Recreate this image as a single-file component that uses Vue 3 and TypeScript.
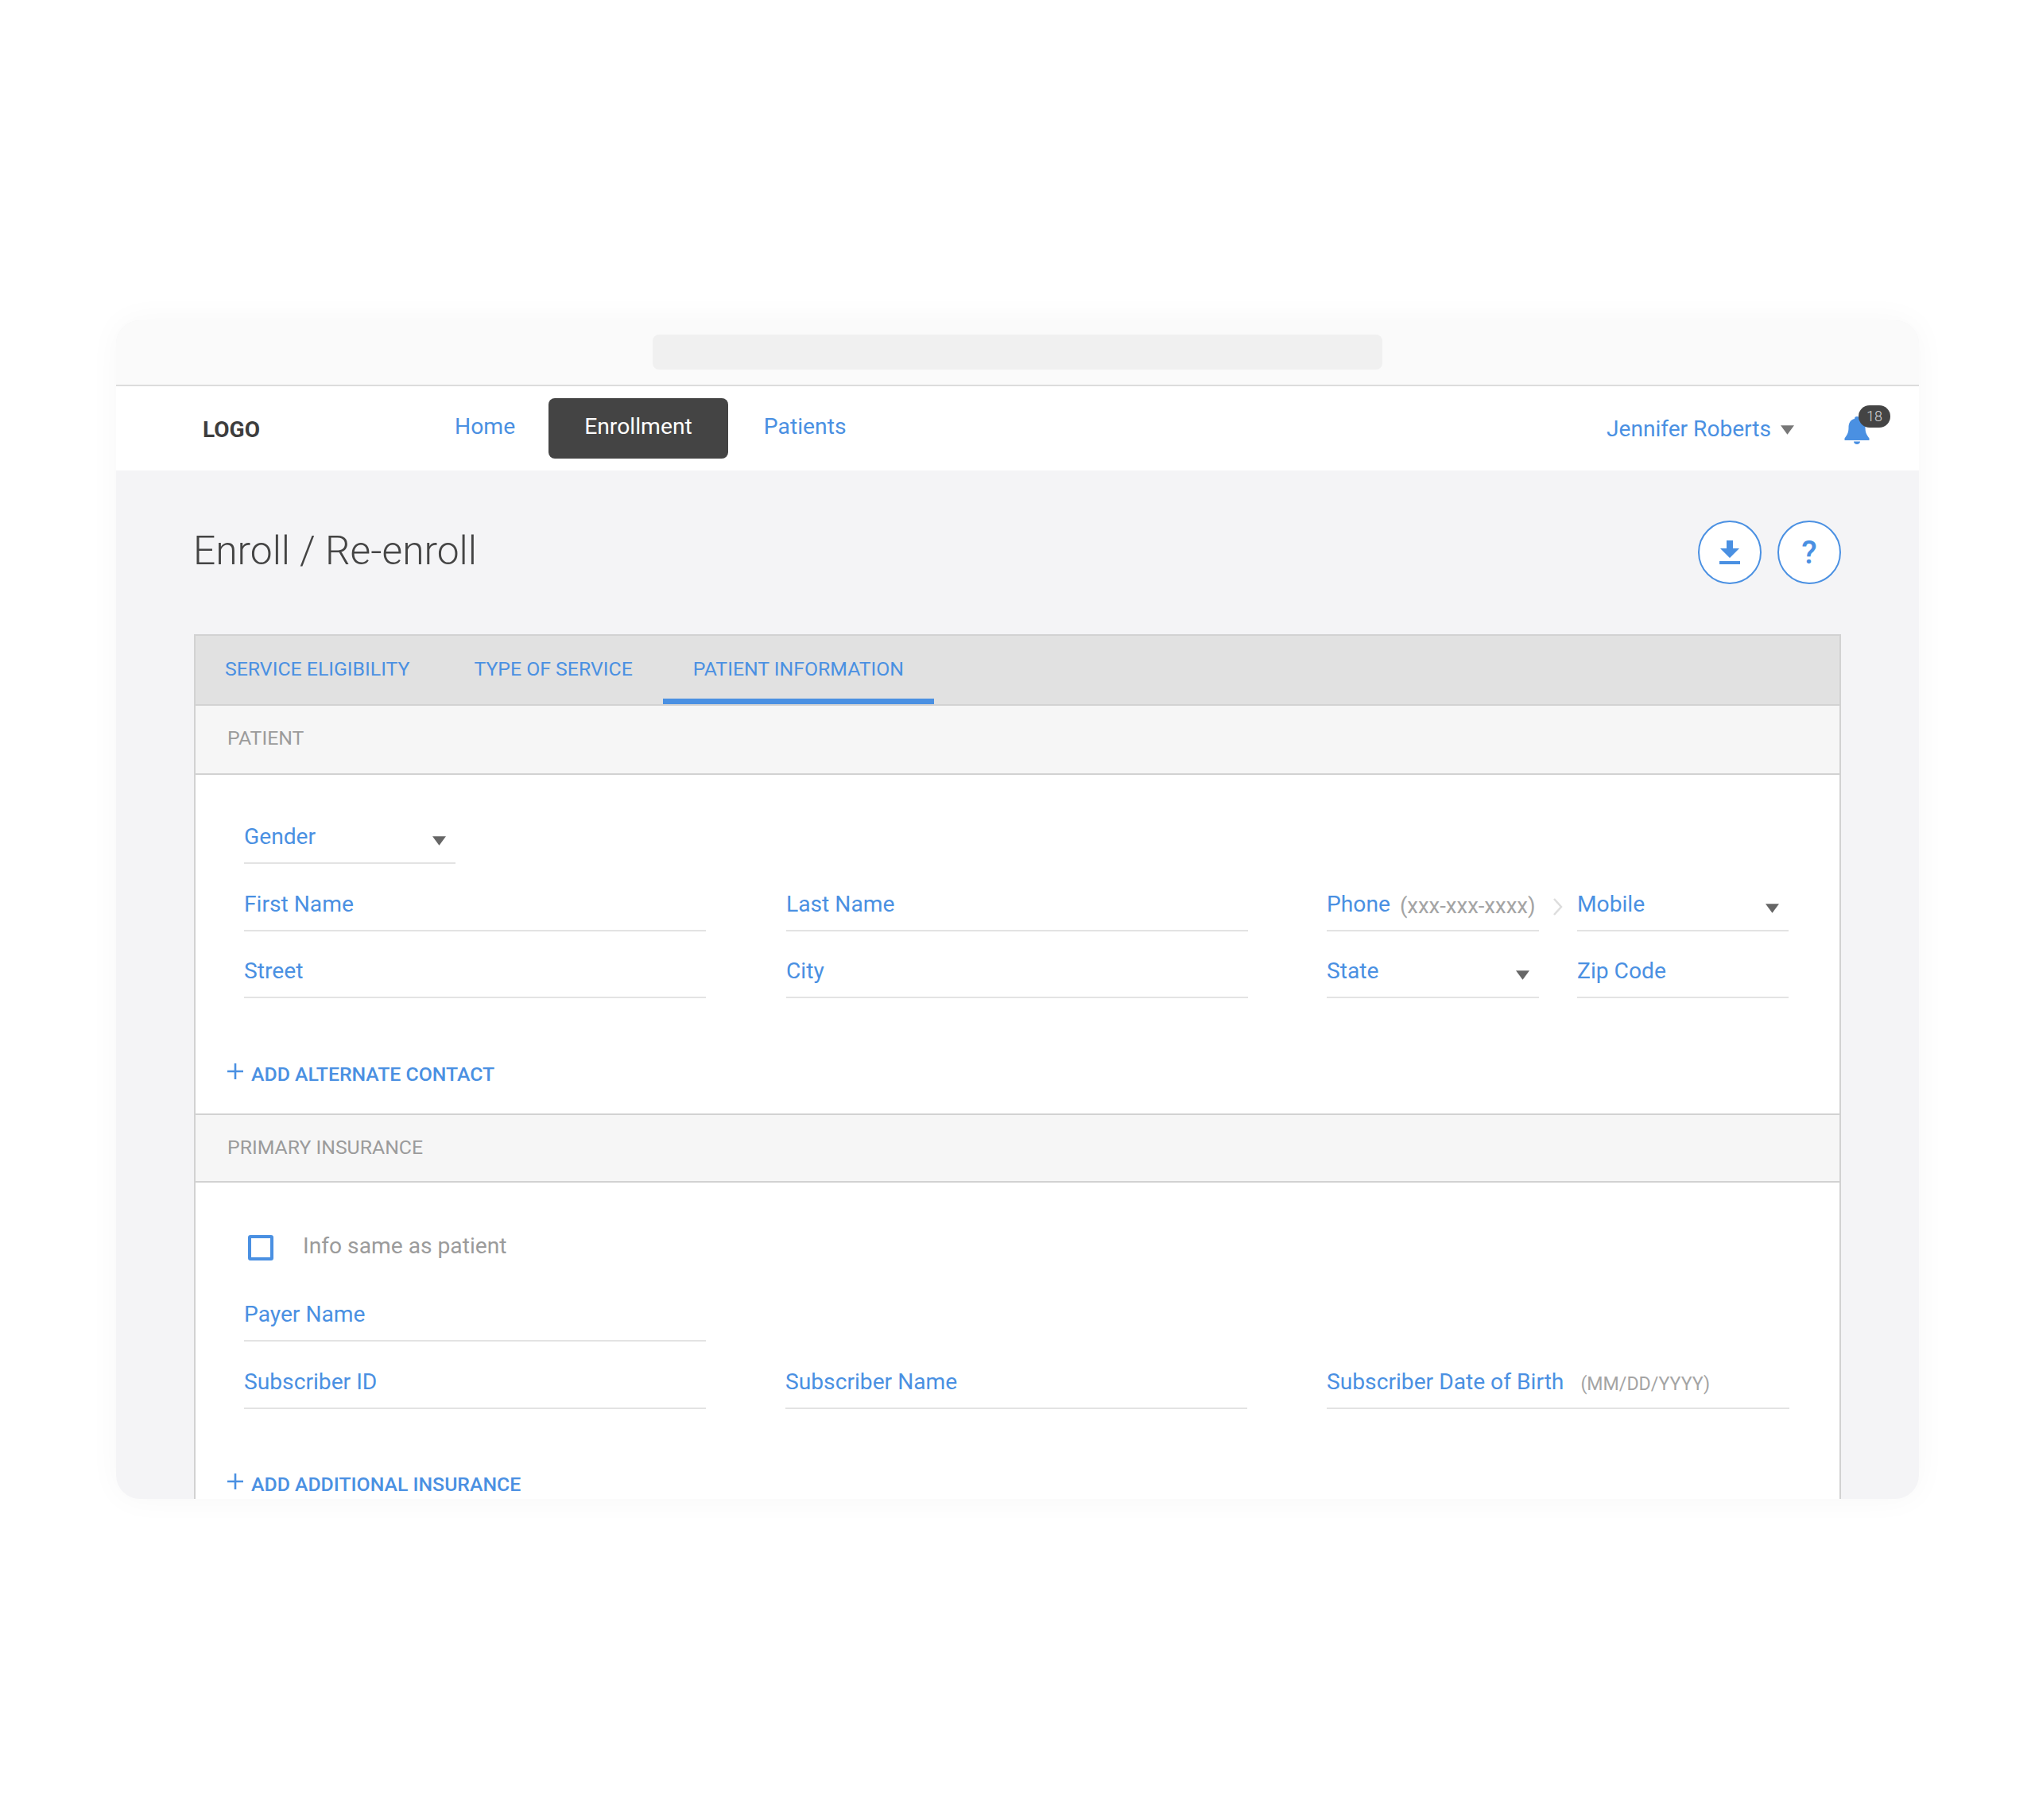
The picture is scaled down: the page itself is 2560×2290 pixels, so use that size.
<script setup lang="ts">
type Field = {
  label: string
}

const subscriberRow: Field[] = [{ label: 'Subscriber ID' }, { label: 'Subscriber Name' }]
const tabs: string[] = ['SERVICE ELIGIBILITY', 'TYPE OF SERVICE', 'PATIENT INFORMATION']
</script>

<template>
  <div class="page">
    <div class="window">
      <div class="chrome">
        <div class="address"></div>
      </div>

      <header class="nav">
        <div class="logo">LOGO</div>
        <a class="nav-link home">Home</a>
        <a class="nav-link active">Enrollment</a>
        <a class="nav-link">Patients</a>
        <div class="user">
          <span class="user-name">Jennifer Roberts</span>
          <svg class="user-caret" viewBox="0 0 18 12"><path d="M0 0H18L9 12Z" /></svg>
        </div>
        <div class="bell">
          <svg viewBox="0 0 32 36" width="32" height="36">
            <path d="M16 1c2 0 3 1.300 3 3 5.500 1.300 7.500 5.500 7.500 11 0 6 1.500 9 5 13.500V31H.5v-2.500C4 24 5.500 21 5.500 15c0-5.500 2-9.700 7.500-11 0-1.700 1-3 3-3Z" />
            <path d="M12 32.500h8c0 2-1.800 3.500-4 3.500s-4-1.500-4-3.500Z" />
          </svg>
          <span class="badge">18</span>
        </div>
      </header>

      <main class="content">
        <div class="title-row">
          <h1>Enroll / Re-enroll</h1>
          <div class="round-buttons">
            <button class="round">
              <svg viewBox="0 0 26 30" width="26" height="30">
                <path d="M9 0h8v10h8L13 22 1 10h8Z" />
                <rect x="0" y="26" width="26" height="4" />
              </svg>
            </button>
            <button class="round question">?</button>
          </div>
        </div>

        <section class="panel">
          <div class="tabs">
            <div v-for="(tab, i) in tabs" :key="tab" class="tab" :class="{ current: i === 2 }">{{ tab }}</div>
          </div>

          <div class="section-head first">PATIENT</div>
          <div class="section-body patient">
            <div class="field gender">
              <span class="label">Gender</span>
              <svg class="caret" viewBox="0 0 18 12"><path d="M0 0H18L9 12Z" /></svg>
            </div>
            <div class="row">
              <div class="field"><span class="label">First Name</span></div>
              <div class="field mid"><span class="label">Last Name</span></div>
              <div class="split">
                <div class="field">
                  <span class="label">Phone</span>
                  <span class="hint phone-hint">(xxx-xxx-xxxx)</span>
                </div>
                <svg class="chevron" viewBox="0 0 14 22"><path d="M2 1l9 10-9 10" /></svg>
                <div class="field">
                  <span class="label">Mobile</span>
                  <svg class="caret" viewBox="0 0 18 12"><path d="M0 0H18L9 12Z" /></svg>
                </div>
              </div>
            </div>
            <div class="row address-row">
              <div class="field"><span class="label">Street</span></div>
              <div class="field mid"><span class="label">City</span></div>
              <div class="split">
                <div class="field">
                  <span class="label">State</span>
                  <svg class="caret" viewBox="0 0 18 12"><path d="M0 0H18L9 12Z" /></svg>
                </div>
                <div class="field"><span class="label">Zip Code</span></div>
              </div>
            </div>
            <a class="add-link contact">
              <svg viewBox="0 0 20 20" width="20" height="20"><path d="M10 0v20M0 10h20" /></svg>
              <span>ADD ALTERNATE CONTACT</span>
            </a>
          </div>

          <div class="section-head">PRIMARY INSURANCE</div>
          <div class="section-body">
            <label class="same">
              <span class="checkbox"></span>
              <span class="same-text">Info same as patient</span>
            </label>
            <div class="row payer">
              <div class="field"><span class="label">Payer Name</span></div>
            </div>
            <div class="row">
              <div v-for="f in subscriberRow" :key="f.label" class="field">
                <span class="label">{{ f.label }}</span>
              </div>
              <div class="field">
                <span class="label">Subscriber Date of Birth</span>
                <span class="hint dob-hint">(MM/DD/YYYY)</span>
              </div>
            </div>
            <a class="add-link insurance">
              <svg viewBox="0 0 20 20" width="20" height="20"><path d="M10 0v20M0 10h20" /></svg>
              <span>ADD ADDITIONAL INSURANCE</span>
            </a>
          </div>
        </section>
      </main>
    </div>
  </div>
</template>

<style>
html,
body {
  margin: 0;
  background: #ffffff;
}
</style>

<style scoped>
.page {
  height: 2290px;
  box-sizing: border-box;
  padding: 403px 146px 0;
  font-family: Roboto, "Liberation Sans", sans-serif;
  color: #4a90e2;
}

.window {
  height: 1483px;
  border-radius: 30px;
  overflow: hidden;
  background: #f4f4f6;
  box-shadow: 0 0 40px rgba(0, 0, 0, 0.035);
}

.chrome {
  height: 83px;
  box-sizing: border-box;
  padding-top: 18px;
  background: #fafafa;
  border-bottom: 2px solid #dcdcdc;
  display: flex;
  justify-content: center;
}

.address {
  width: 918px;
  height: 44px;
  border-radius: 8px;
  background: #f0f0f0;
}

.nav {
  height: 106px;
  background: #ffffff;
  display: flex;
  align-items: center;
}

.logo {
  width: 318px;
  margin-left: 109px;
  font-size: 28px;
  font-weight: 700;
  color: #3d3d3d;
  padding-top: 2px;
  box-sizing: border-box;
}

.nav-link {
  font-size: 28.3px;
  height: 76px;
  padding: 0 45px;
  box-sizing: border-box;
  line-height: 72px;
}

.nav-link.home {
  padding: 0 42px 0 0;
  margin-left: -1px;
}

.nav-link.active {
  background: #444444;
  color: #ffffff;
  border-radius: 8px;
}

.user {
  margin-left: auto;
  display: flex;
  align-items: center;
}

.user-name {
  font-size: 28.1px;
}

.user-caret {
  width: 17px;
  height: 12px;
  margin-left: 12px;
  margin-top: 4px;
  fill: #777777;
}

.bell {
  width: 62px;
  margin-left: 63px;
  margin-right: 32px;
  height: 36px;
  position: relative;
  margin-top: 4px;
}

.bell svg {
  fill: #4a90e2;
  display: block;
}

.badge {
  position: absolute;
  left: 18px;
  top: -13px;
  width: 40px;
  height: 28px;
  border-radius: 14px;
  background: #444444;
  color: #d8d8d8;
  font-size: 18px;
  font-weight: 300;
  line-height: 28px;
  text-align: center;
}

.content {
  padding: 0 98px;
}

.title-row {
  height: 206px;
  display: flex;
  justify-content: space-between;
  align-items: flex-start;
}

h1 {
  margin: 71px 0 0 -1px;
  font-size: 49.7px;
  line-height: 60px;
  font-weight: 300;
  color: #444444;
}

.round-buttons {
  display: flex;
  gap: 20px;
  margin-top: 63px;
}

.round {
  width: 80px;
  height: 80px;
  padding: 0;
  border: 2.5px solid #4a90e2;
  border-radius: 50%;
  background: #ffffff;
  display: flex;
  align-items: center;
  justify-content: center;
  font-family: inherit;
  color: #4a90e2;
}

.round svg {
  fill: #4a90e2;
}

.question {
  font-size: 40px;
  font-weight: 500;
}

.panel {
  background: #ffffff;
  border: solid #d2d2d2;
  border-width: 2px 2px 0;
}

.tabs {
  height: 86px;
  background: #e1e1e1;
  display: flex;
  border-bottom: 2px solid #d2d2d2;
}

.tab {
  font-size: 24.8px;
  line-height: 84px;
  padding: 0 38px;
  white-space: nowrap;
}

.tab:first-child {
  padding: 0 43px 0 37px;
}

.tab.current {
  border-bottom: 7px solid #4a90e2;
  height: 79px;
  margin-bottom: -2px;
}

.section-head {
  height: 87px;
  box-sizing: border-box;
  padding-left: 40px;
  font-size: 24.8px;
  line-height: 82px;
  color: #9b9b9b;
  background: #f6f6f6;
  border-top: 2px solid #d2d2d2;
  border-bottom: 2px solid #d2d2d2;
}

.section-head.first {
  border-top: 0;
}

.section-body {
  padding: 62px 61px 0;
}

.section-body.patient {
  padding-top: 60px;
}

.row {
  display: grid;
  grid-template-columns: 581px 581px 582px;
  column-gap: 100px;
  margin-top: 33px;
}

.address-row {
  margin-top: 32px;
}

.field {
  height: 52px;
  box-sizing: border-box;
  border-bottom: 2px solid #e3e3e3;
  display: flex;
  align-items: flex-end;
  padding-bottom: 15px;
  position: relative;
  line-height: 34px;
}

.field.mid {
  margin: 0 -1px 0 1px;
}

.gender {
  width: 266px;
}

.label {
  font-size: 28.2px;
  white-space: nowrap;
}

.hint {
  color: #a4a4a4;
  white-space: nowrap;
  margin-bottom: -2px;
}

.phone-hint {
  font-size: 27.5px;
  margin-left: 12px;
}

.dob-hint {
  font-size: 23.2px;
  margin-left: 21px;
}

.caret {
  position: absolute;
  right: 12px;
  top: 17px;
  width: 17px;
  height: 12px;
  fill: #666666;
}

.split {
  display: grid;
  grid-template-columns: 267px 266px;
  column-gap: 48px;
  position: relative;
}

.chevron {
  position: absolute;
  left: 284px;
  top: 10px;
  width: 14px;
  height: 22px;
  fill: none;
  stroke: #dddddd;
  stroke-width: 2.5;
}

.add-link {
  display: flex;
  align-items: flex-end;
  font-size: 24.8px;
  font-weight: 500;
  line-height: 34px;
  margin-left: -21px;
}

.add-link svg {
  stroke: #4a90e2;
  stroke-width: 2.6;
  fill: none;
  margin-right: 10px;
  margin-bottom: 11px;
}

.contact {
  margin-top: 79px;
  padding-bottom: 32px;
}

.same {
  display: flex;
  align-items: center;
  margin-left: 5px;
  height: 40px;
  margin-top: -1px;
  color: #9b9b9b;
}

.checkbox {
  width: 32px;
  height: 32px;
  box-sizing: border-box;
  border: 4px solid #4a90e2;
  border-radius: 3px;
  margin-top: 2px;
}

.same-text {
  font-size: 28.2px;
  margin-left: 37px;
  margin-bottom: 4px;
}

.payer {
  margin-top: 47px;
}

.insurance {
  margin-top: 78px;
  padding-bottom: 40px;
}
</style>
